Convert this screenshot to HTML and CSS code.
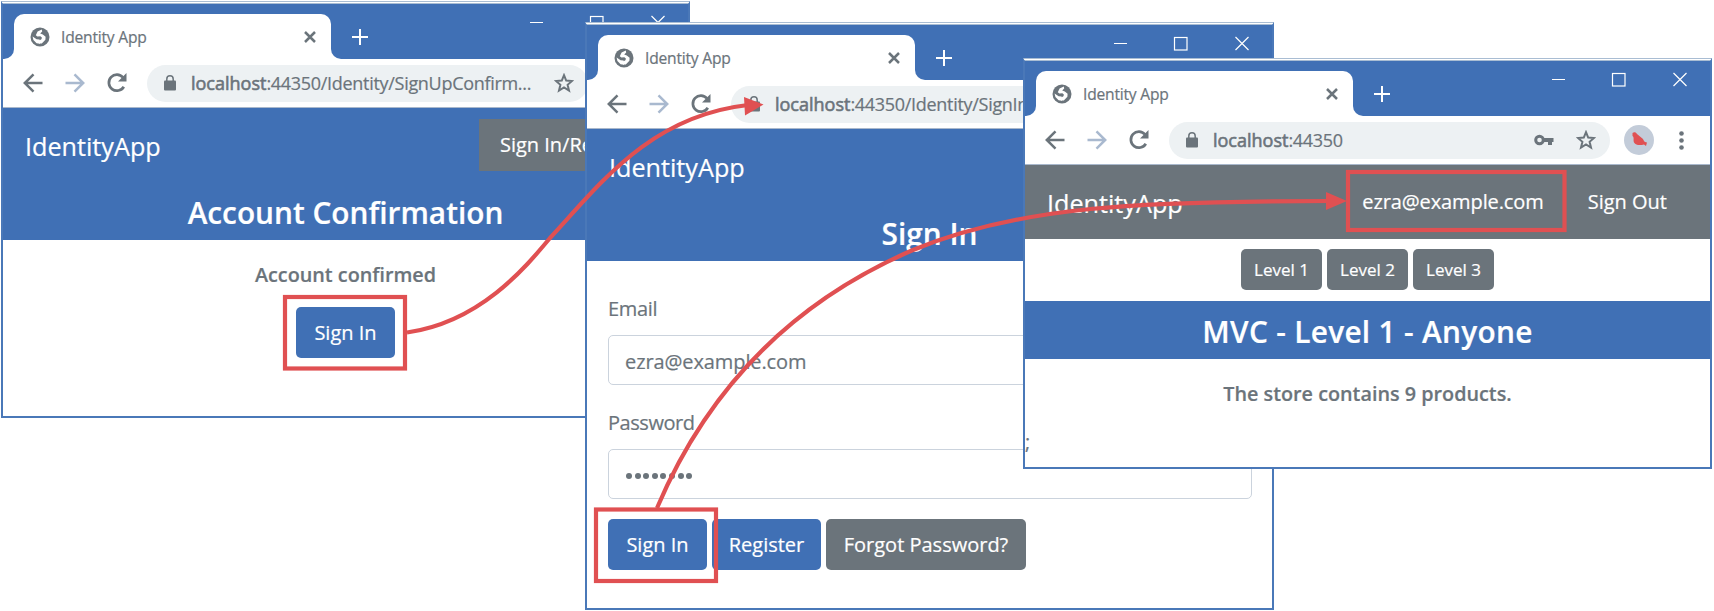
FILE: index.html
```html
<!DOCTYPE html>
<html lang="en">
<head>
<meta charset="utf-8">
<title>Identity App</title>
<link rel="stylesheet" href="styles.css">
</head>
<body>
<svg class="defs" aria-hidden="true">
  <symbol id="globe" viewBox="0 0 20 20"><circle cx="10" cy="10" r="9.500" fill="#6b747b"/><path d="M11.800 2.600 7.600 4.600 5.800 8.200 7.400 9.400 10.400 9.200 12 10.800 11.200 12.600 8.800 13.400 9 16.600 11.800 16.400 15.400 12.800 15.600 9.800 12.800 7.600 10.200 6.400 12.200 4.600z" fill="#fff"/><path d="M2.600 9.400 6.600 12.200 9.600 12.400 10 16.800 6.600 16.200 3.400 13z" fill="#fff"/></symbol>
  <symbol id="cross" viewBox="0 0 12 12"><path d="M1 1l10 10M11 1L1 11" stroke="#6b747b" stroke-width="2.5"/></symbol>
  <symbol id="plus" viewBox="0 0 16 16"><path d="M8 0v16M0 8h16" stroke="#fff" stroke-width="2"/></symbol>
  <symbol id="controls" viewBox="0 0 136 15"><path d="M0 7.500h13M121.500 1l13 13M134.500 1l-13 13" stroke="#fff" stroke-width="1.200" fill="none"/><rect x="60.500" y="1.500" width="12.500" height="12.500" stroke="#fff" stroke-width="1.200" fill="none"/></symbol>
  <symbol id="arrow" viewBox="0 0 20 20"><path d="M19.500 10H2M10.500 1.300 1.800 10l8.700 8.700" fill="none" stroke="currentColor" stroke-width="2.500"/></symbol>
  <symbol id="reload" viewBox="0 0 20 20"><path d="M16.800 13.700A8 8 0 1 1 16 4.500" fill="none" stroke="#6b747b" stroke-width="2.700"/><path d="M19.500 0v8.500H11z" fill="#6b747b"/></symbol>
  <symbol id="lock" viewBox="0 0 12 16"><rect x="0" y="5.500" width="12" height="10" rx="1" fill="#6b747b"/><path d="M2.800 6V4a3.200 3.200 0 0 1 6.400 0v2" fill="none" stroke="#6b747b" stroke-width="1.500"/></symbol>
  <symbol id="star" viewBox="0 0 20 20"><path d="M10 2.200l2.200 5.400 5.800.4-4.400 3.800 1.400 5.700-5-3.100-5 3.100 1.400-5.700L2 8l5.800-.4z" fill="none" stroke="#6b747b" stroke-width="2"/></symbol>
  <symbol id="key" viewBox="0 0 20 12"><circle cx="5.500" cy="6" r="3.800" fill="none" stroke="#6b747b" stroke-width="3"/><path d="M9 4h10.500v4H18v3h-4V8H9z" fill="#6b747b"/></symbol>
</svg>

<main class="canvas">
  <section class="window w1">
    <div class="titlebar">
      <div class="edge"></div>
      <div class="tabwrap"><div class="tab"><svg class="i-globe"><use href="#globe"/></svg><span class="tabname">Identity App</span><svg class="i-cross"><use href="#cross"/></svg></div></div>
      <div class="rest"><svg class="i-plus"><use href="#plus"/></svg><svg class="i-controls"><use href="#controls"/></svg></div>
    </div>
    <div class="toolbar">
      <svg class="i-nav"><use href="#arrow"/></svg><svg class="i-nav fwd"><use href="#arrow"/></svg><svg class="i-nav"><use href="#reload"/></svg>
      <div class="address"><svg class="i-lock"><use href="#lock"/></svg><span class="url"><b>localhost</b>:44350/Identity/SignUpConfirm...</span><svg class="i-star"><use href="#star"/></svg></div>
    </div>
    <nav class="navbar"><span class="brand">IdentityApp</span><span class="navlink boxed">Sign In/Register</span></nav>
    <h1 class="band">Account Confirmation</h1>
    <div class="confirm"><strong>Account confirmed</strong><span class="btn">Sign In</span></div>
  </section>

  <section class="window w2">
    <div class="titlebar">
      <div class="edge"></div>
      <div class="tabwrap"><div class="tab"><svg class="i-globe"><use href="#globe"/></svg><span class="tabname">Identity App</span><svg class="i-cross"><use href="#cross"/></svg></div></div>
      <div class="rest"><svg class="i-plus"><use href="#plus"/></svg><svg class="i-controls"><use href="#controls"/></svg></div>
    </div>
    <div class="toolbar">
      <svg class="i-nav"><use href="#arrow"/></svg><svg class="i-nav fwd"><use href="#arrow"/></svg><svg class="i-nav"><use href="#reload"/></svg>
      <div class="address"><svg class="i-lock"><use href="#lock"/></svg><span class="url"><b>localhost</b>:44350/Identity/SignIn</span></div>
    </div>
    <nav class="navbar"><span class="brand">IdentityApp</span></nav>
    <h1 class="band">Sign In</h1>
    <div class="form">
      <label>Email</label>
      <div class="input">ezra@example.com</div>
      <label class="tight">Password</label>
      <div class="input pw"><i></i><i></i><i></i><i></i><i></i><i></i><i></i><i></i></div>
      <div class="buttons"><span class="btn">Sign In</span><span class="btn reg">Register</span><span class="btn grey forgot">Forgot Password?</span></div>
    </div>
  </section>

  <section class="window w3">
    <div class="titlebar">
      <div class="edge"></div>
      <div class="tabwrap"><div class="tab"><svg class="i-globe"><use href="#globe"/></svg><span class="tabname">Identity App</span><svg class="i-cross"><use href="#cross"/></svg></div></div>
      <div class="rest"><svg class="i-plus"><use href="#plus"/></svg><svg class="i-controls"><use href="#controls"/></svg></div>
    </div>
    <div class="toolbar">
      <svg class="i-nav"><use href="#arrow"/></svg><svg class="i-nav fwd"><use href="#arrow"/></svg><svg class="i-nav"><use href="#reload"/></svg>
      <div class="address"><svg class="i-lock"><use href="#lock"/></svg><span class="url"><b>localhost</b>:44350</span><svg class="i-key"><use href="#key"/></svg><svg class="i-star"><use href="#star"/></svg></div>
      <svg class="i-avatar" viewBox="0 0 30 30"><circle cx="15" cy="15" r="15" fill="#c3ccd9"/><path d="M8.500 8C10 6.500 12 7 13 9l6 5c1 2 1 3 4 3.500l-1 3.500-2-1.500c-4 1-8 1-10-2-1-3 .5-5-1.500-6.500z" fill="#e05052"/></svg>
      <svg class="i-dots" viewBox="0 0 5 19"><circle cx="2.500" cy="2.500" r="2.300"/><circle cx="2.500" cy="9.500" r="2.300"/><circle cx="2.500" cy="16.500" r="2.300"/></svg>
    </div>
    <nav class="navbar grey"><span class="brand">IdentityApp</span><span class="navlink user">ezra@example.com</span><span class="navlink">Sign Out</span></nav>
    <div class="levels"><span class="btn sm grey">Level 1</span><span class="btn sm grey">Level 2</span><span class="btn sm grey">Level 3</span></div>
    <h1 class="band wide">MVC - Level 1 - Anyone</h1>
    <div class="store"><strong>The store contains 9 products.</strong></div>
    <div class="semi">;</div>
  </section>

  <svg class="overlay" viewBox="0 0 1714 611">
    <g fill="none" stroke="#e05052" stroke-width="4.200">
      <rect x="285" y="297" width="120" height="71.500"/>
      <rect x="596" y="509.500" width="120" height="71.500"/>
      <rect x="1348" y="172" width="216.500" height="58"/>
      <path d="M407 332.500C480 322 525 268 550 238C600 184 650 116 748 105"/>
      <path d="M657 508C705 395 785 305 913 250C1020 206 1140 201 1330 201"/>
    </g>
    <path d="M744 97L763.500 104.500L745 115.500zM1326 192L1347 201L1326 210z" fill="#e05052"/>
  </svg>
</main>
</body>
</html>
```
FILE: styles.css
```css
* { box-sizing: border-box; }
body { margin: 0; background: #fff; color: #6b747b; font-family: "Open Sans", "Noto Sans", sans-serif; font-size: 20px; -webkit-text-stroke: 0.2px currentColor; }
.defs { position: absolute; width: 0; height: 0; }
.canvas { position: relative; width: 1714px; height: 611px; overflow: hidden; }
.window { position: absolute; width: 689px; background: #fff; border: 2px solid #4a78b8; border-top: 3px double #a9bdd3; overflow: hidden; white-space: nowrap; }
.w1 { left: 1px; top: 1px; height: 417px; }
.w2 { left: 585px; top: 22px; height: 588px; }
.w3 { left: 1023px; top: 58px; height: 411px; }
svg { display: block; flex: none; }

.titlebar { display: flex; height: 55px; border-top: 10px solid #4070b5; }
.edge { width: 11px; background: #4070b5; border-bottom-right-radius: 10px; }
.tabwrap { width: 317px; background: linear-gradient(#4070b5 50%, #fff 50%); }
.tab { display: flex; align-items: center; height: 45px; padding: 0 15px 0 16px; background: #fff; border-radius: 10px 10px 0 0; }
.tabname { flex: none; margin-left: 11px; font-size: 15.6px; letter-spacing: -0.2px; }
.rest { display: flex; flex: 1; background: #4070b5; border-bottom-left-radius: 10px; }
.i-globe { width: 20px; height: 20px; }
.i-cross { width: 12px; height: 12px; margin-left: auto; }
.i-plus { width: 16px; height: 16px; margin: 15px 0 0 21px; }
.i-controls { width: 136px; height: 15px; margin: 1px 22px 0 auto; }

.toolbar { display: flex; align-items: center; height: 49px; padding: 0 26px 0 20px; border-bottom: 1px solid #a9b8cc; }
.i-nav { width: 20px; height: 20px; margin-right: 22px; color: #6b747b; }
.fwd { color: #a9b9cf; transform: scaleX(-1); }
.address { display: flex; align-items: center; width: 441px; height: 37px; margin-left: -2px; padding: 0 14px 0 17px; background: #edf1f3; border-radius: 19px; }
.i-lock { width: 12px; height: 16px; }
.url { margin-left: 15px; font-size: 18px; letter-spacing: -0.3px; }
.url b { font-weight: 400; letter-spacing: 0; -webkit-text-stroke: 0.6px currentColor; }
.i-key { width: 20px; height: 12px; margin-left: auto; }
.i-star { width: 20px; height: 20px; margin-left: auto; }
.i-key + .i-star { margin-left: 22px; }
.i-avatar { width: 30px; height: 30px; margin-left: 14px; }
.i-dots { width: 5px; height: 19px; margin-left: auto; fill: #6b747b; }

.navbar { display: flex; align-items: center; height: 74px; padding: 0 21px 0 22px; background: #4070b5; color: #fff; }
.navbar.grey { background: #6b747b; }
.brand { margin-right: auto; padding-top: 1px; font-size: 25.2px; }
.navlink { padding: 0 22px; line-height: 52px; }
.user { letter-spacing: -0.1px; }
.boxed { padding-left: 21px; background: #6b747b; }
.band { display: flex; align-items: center; justify-content: center; height: 58px; margin: 0; padding-top: 3px; background: #4070b5; color: #fff; font-size: 29.8px; font-weight: 600; }
.wide { letter-spacing: 0.32px; }

.btn { display: inline-flex; align-items: center; justify-content: center; width: 99px; height: 51px; background: #4070b5; color: #fff; border-radius: 5px; }
.btn.grey { background: #6b747b; }
.btn.reg { width: 109px; }
.btn.forgot { width: 200px; }
.btn.sm { width: 81px; height: 41px; font-size: 17px; }
strong { font-weight: 600; font-size: 19.8px; }
.confirm { display: flex; flex-direction: column; align-items: center; padding-top: 20px; }
.confirm strong { line-height: 30px; margin-bottom: 17px; }

.form { padding: 33px 20px 0 21px; }
.form label { display: block; height: 41px; line-height: 30px; letter-spacing: -0.3px; }
.form .tight { letter-spacing: -0.45px; }
.input { display: flex; align-items: center; height: 50px; margin-bottom: 23px; padding: 2px 16px 0; border: 1.500px solid #cbd3dd; border-radius: 5px; letter-spacing: -0.1px; }
.pw { gap: 2.600px; margin-bottom: 20px; padding: 3px 17px 0; }
.pw i { width: 6px; height: 6px; border-radius: 50%; background: #6b747b; }
.buttons { display: flex; gap: 5px; }

.levels { display: flex; justify-content: center; gap: 5px; height: 62px; padding-top: 10px; }
.store { display: flex; justify-content: center; padding-top: 20px; line-height: 30px; }
.semi { margin-top: 18px; line-height: 30px; }
.overlay { position: absolute; left: 0; top: 0; width: 1714px; height: 611px; }
```
